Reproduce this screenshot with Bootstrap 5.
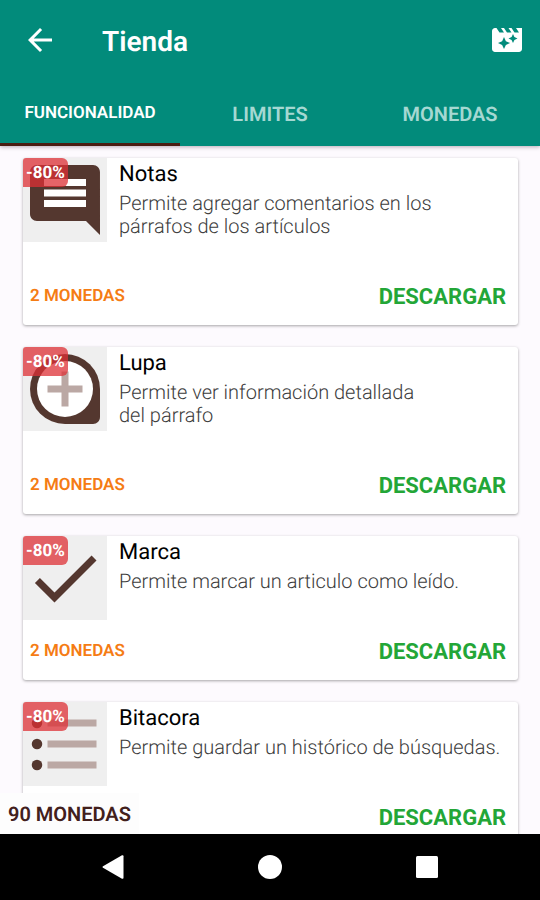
<!DOCTYPE html>
<html lang="es">
<head>
<meta charset="utf-8">
<meta name="viewport" content="width=device-width, initial-scale=1">
<title>Tienda</title>
<link href="https://cdn.jsdelivr.net/npm/bootstrap@5.3.0/dist/css/bootstrap.min.css" rel="stylesheet">
<style>
  body { font-family: Roboto, "Liberation Sans", sans-serif; background: #fdfafe; color: #000; text-rendering: geometricPrecision; }
  svg { display: block; }
  .topbar { background: #028b7b; box-shadow: 0 1px 4px rgba(60, 20, 50, .35); z-index: 2; }
  .toolbar-row { height: 80px; padding: 0 15px 0 22px; }
  .toolbar-title { font-size: 28px; line-height: 36px; font-weight: 600; margin-left: 44px; padding-top: 4px; }
  .shop-tabs .nav-link { height: 66px; padding: 4px 0 0; border-radius: 0; border-bottom: 3px solid transparent; font-size: 20px; font-weight: 600; color: #a5d8d2; }
  .shop-tabs .nav-link.active { font-size: 17px; color: #fff; background: none; border-bottom-color: #4a1d12; }
  .shop-list { padding: 12px 22px 0 23px; gap: 22px; }
  .shop-item { border: 0; border-radius: 3px; box-shadow: 0 1px 3px rgba(0, 0, 0, .35); }
  .thumb { width: 84px; height: 84px; background: #efefef; }
  .discount { background: rgba(222, 48, 54, .75); color: #fff; font-size: 17px; line-height: 29px; font-weight: 700; padding: 1px 3px 0; height: 29px; border-radius: 3px 6px 6px 0; }
  .item-text { padding: 4px 0 28px 12px; }
  .item-name { font-size: 22px; line-height: 26px; font-weight: 400; margin-bottom: 4px; }
  .item-desc { font-size: 20px; line-height: 23px; font-weight: 300; color: #3c3c3c; }
  .item-foot { height: 59px; padding: 2px 12px 0 7px; }
  .price { font-size: 17px; font-weight: 600; color: #f57c14; }
  .get-btn { font-size: 22px; line-height: 28px; font-weight: 700; color: #23a637; }
  .balance { background: #fdfdfd; font-size: 20px; line-height: 40px; font-weight: 600; color: #42201c; padding: 1px 8px 0; }
  .sysbar { background: #000; height: 66px; padding: 0 34px; z-index: 2; }
  .brown { fill: #54372f; }
  .taupe { fill: #bba8a4; }
</style>
<script src="https://cdn.jsdelivr.net/npm/bootstrap@5.3.0/dist/js/bootstrap.bundle.min.js"></script>
</head>
<body>
<div class="d-flex flex-column vh-100 overflow-hidden">
  <header class="topbar position-relative flex-shrink-0">
    <div class="toolbar-row d-flex align-items-center text-white">
      <button class="btn p-0 border-0" type="button" aria-label="Volver">
        <svg width="36" height="36" viewBox="0 0 24 24" fill="#fff"><path d="M20 11H7.830l5.590-5.590L12 4l-8 8 8 8 1.410-1.410L7.830 13H20z"/></svg>
      </button>
      <h1 class="toolbar-title mb-0 flex-grow-1">Tienda</h1>
      <button class="btn p-0 border-0" type="button" aria-label="Ver video">
        <svg width="36" height="36" viewBox="0 0 24 24" fill="#fff"><path d="M18 4l2 3h-3l-2-3h-2l2 3h-3l-2-3H8l2 3H7L5 4H4c-1.100 0-1.990.9-1.990 2L2 18c0 1.100.9 2 2 2h16c1.100 0 2-.9 2-2V4h-4zm-6.750 11.250L10 18l-1.250-2.750L6 14l2.750-1.250L10 10l1.250 2.750L14 14l-2.750 1.250zm5.690-3.310L16 14l-.940-2.060L13 11l2.060-.940L16 8l.940 2.060L19 11l-2.060.940z"/></svg>
      </button>
    </div>
    <nav class="shop-tabs nav nav-justified">
      <a class="nav-link active d-flex align-items-center justify-content-center" aria-current="page" href="#funcionalidad">FUNCIONALIDAD</a>
      <a class="nav-link d-flex align-items-center justify-content-center" href="#limites">LIMITES</a>
      <a class="nav-link d-flex align-items-center justify-content-center" href="#monedas">MONEDAS</a>
    </nav>
  </header>

  <main class="position-relative flex-grow-1 overflow-hidden">
    <div class="shop-list d-flex flex-column" id="funcionalidad">
      <article class="shop-item card">
        <div class="d-flex align-items-start">
          <div class="thumb position-relative flex-shrink-0">
            <svg width="84" height="84" viewBox="0 0 24 24"><path fill="#fff" d="M5 5h14v10H5z"/><path class="brown" d="M21.990 4c0-1.100-.890-2-1.990-2H4c-1.100 0-2 .9-2 2v12c0 1.100.9 2 2 2h14l4 4-.010-18zM18 14H6v-2h12v2zm0-3H6V9h12v2zm0-3H6V6h12v2z"/></svg>
            <span class="discount position-absolute top-0 start-0">-80%</span>
          </div>
          <div class="item-text">
            <h2 class="item-name">Notas</h2>
            <p class="item-desc mb-0">Permite agregar comentarios en los<br>párrafos de los artículos</p>
          </div>
        </div>
        <div class="item-foot d-flex align-items-center justify-content-between">
          <span class="price">2 MONEDAS</span>
          <button class="get-btn btn p-0 border-0" type="button">DESCARGAR</button>
        </div>
      </article>

      <article class="shop-item card">
        <div class="d-flex align-items-start">
          <div class="thumb position-relative flex-shrink-0">
            <svg width="84" height="84" viewBox="0 0 24 24"><path class="brown" d="M12 2a10 10 0 0 0 0 20h8c1.100 0 2-.9 2-2v-8A10 10 0 0 0 12 2z"/><circle cx="12" cy="12" r="8" fill="#fff"/><path class="taupe" d="M11 7h2v4h4v2h-4v4h-2v-4H7v-2h4z"/></svg>
            <span class="discount position-absolute top-0 start-0">-80%</span>
          </div>
          <div class="item-text">
            <h2 class="item-name">Lupa</h2>
            <p class="item-desc mb-0">Permite ver información detallada<br>del párrafo</p>
          </div>
        </div>
        <div class="item-foot d-flex align-items-center justify-content-between">
          <span class="price">2 MONEDAS</span>
          <button class="get-btn btn p-0 border-0" type="button">DESCARGAR</button>
        </div>
      </article>

      <article class="shop-item card">
        <div class="d-flex align-items-start">
          <div class="thumb position-relative flex-shrink-0">
            <svg width="84" height="84" viewBox="0 0 24 24"><path class="brown" d="M9 16.170L4.830 12l-1.420 1.410L9 19 21 7l-1.410-1.410z"/></svg>
            <span class="discount position-absolute top-0 start-0">-80%</span>
          </div>
          <div class="item-text">
            <h2 class="item-name">Marca</h2>
            <p class="item-desc mb-0">Permite marcar un articulo como leído.</p>
          </div>
        </div>
        <div class="item-foot d-flex align-items-center justify-content-between">
          <span class="price">2 MONEDAS</span>
          <button class="get-btn btn p-0 border-0" type="button">DESCARGAR</button>
        </div>
      </article>

      <article class="shop-item card">
        <div class="d-flex align-items-start">
          <div class="thumb position-relative flex-shrink-0">
            <svg width="84" height="84" viewBox="0 0 24 24"><g class="brown"><circle cx="4" cy="6" r="1.500"/><circle cx="4" cy="12" r="1.500"/><circle cx="4" cy="18" r="1.500"/></g><path class="taupe" d="M7 5h14v2H7zM7 11h14v2H7zM7 17h14v2H7z"/></svg>
            <span class="discount position-absolute top-0 start-0">-80%</span>
          </div>
          <div class="item-text">
            <h2 class="item-name">Bitacora</h2>
            <p class="item-desc mb-0">Permite guardar un histórico de búsquedas.</p>
          </div>
        </div>
        <div class="item-foot d-flex align-items-center justify-content-end">
          <button class="get-btn btn p-0 border-0" type="button">DESCARGAR</button>
        </div>
      </article>
    </div>
    <div class="balance position-absolute bottom-0 start-0">90 MONEDAS</div>
  </main>

  <footer class="sysbar d-flex align-items-center flex-shrink-0">
    <button class="btn p-0 border-0 d-flex justify-content-center flex-fill" type="button" aria-label="Atrás"><svg width="26" height="26" viewBox="0 0 26 26" fill="#fff"><path d="M3 12.200L22 1.300q1.500-.6 1.500 1v21.400q0 1.600-1.500 1L3 13.800q-1.200-.8 0-1.600z"/></svg></button>
    <button class="btn p-0 border-0 d-flex justify-content-center flex-fill" type="button" aria-label="Inicio"><svg width="26" height="26" viewBox="0 0 26 26" fill="#fff"><circle cx="13" cy="13" r="12"/></svg></button>
    <button class="btn p-0 border-0 d-flex justify-content-center flex-fill" type="button" aria-label="Recientes"><svg width="26" height="26" viewBox="0 0 26 26" fill="#fff"><rect x="2" y="2" width="22" height="22" rx="1.500"/></svg></button>
  </footer>
</div>
</body>
</html>
